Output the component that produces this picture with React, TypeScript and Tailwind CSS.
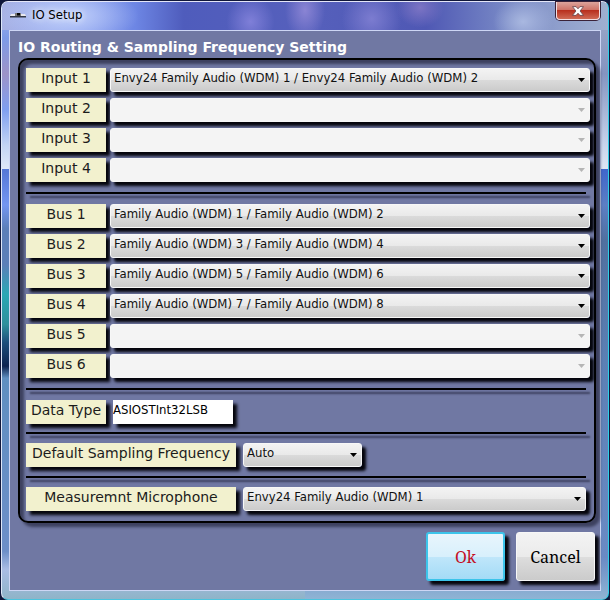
import { useState } from "react";

const device = "Envy24 Family Audio (WDM) 1";
const devicePair = "Envy24 Family Audio (WDM) 1 / Envy24 Family Audio (WDM) 2";

const inputs = [
    { name: "Input 1", value: devicePair },
    { name: "Input 2", value: "" },
    { name: "Input 3", value: "" },
    { name: "Input 4", value: "" },
];

const buses = [
    { name: "Bus 1", value: "Family Audio (WDM) 1 / Family Audio (WDM) 2" },
    { name: "Bus 2", value: "Family Audio (WDM) 3 / Family Audio (WDM) 4" },
    { name: "Bus 3", value: "Family Audio (WDM) 5 / Family Audio (WDM) 6" },
    { name: "Bus 4", value: "Family Audio (WDM) 7 / Family Audio (WDM) 8" },
    { name: "Bus 5", value: "" },
    { name: "Bus 6", value: "" },
];

function Label({ id, text, wide }: { id: string; text: string; wide?: boolean }) {
    return (
        <label
            htmlFor={id}
            className={
                "h-6 shrink-0 bg-[#f2f1ce] text-center text-sm leading-5 text-[#1c1c1c] shadow-[4px_4px_3px_#05050c] " +
                (wide ? "w-[210px]" : "w-20")
            }
        >
            {text}
        </label>
    );
}

function Combo({ id, value, className }: { id: string; value: string; className: string }) {
    const empty = value === "";
    return (
        <div className={"relative h-6 " + className}>
            <select
                id={id}
                disabled={empty}
                defaultValue={value}
                className="block h-6 w-full appearance-none rounded-[3px] border border-[#f7f7f7] bg-[linear-gradient(180deg,#f3f3f3_0%,#e9e9e9_50%,#dadada_52%,#cbcbcb_100%)] pr-6 pb-1 pl-[3px] font-['DejaVu_Sans_Condensed','DejaVu_Sans',sans-serif] text-[13px] leading-4 text-[#111] opacity-100 shadow-[4px_4px_3px_#05050c] outline-none disabled:bg-[#f4f4f4] disabled:bg-none"
            >
                <option value={value}>{value}</option>
            </select>
            <svg
                viewBox="0 0 7 4"
                className={"pointer-events-none absolute top-[10px] right-[5px] h-1 w-[7px] " + (empty ? "fill-[#b5b5b5]" : "fill-black")}
            >
                <path d="M0 0h7L3.5 4z" />
            </svg>
        </div>
    );
}

function Divider({ className }: { className: string }) {
    return <hr className={"mr-1 h-[2px] border-0 bg-black shadow-[4px_4px_2px_#3d415f] " + className} />;
}

function Rows({ rows }: { rows: { name: string; value: string }[] }) {
    return (
        <div className="flex flex-col gap-[6px]">
            {rows.map((row) => (
                <div key={row.name} className="flex gap-1">
                    <Label id={row.name} text={row.name} />
                    <Combo id={row.name} value={row.value} className="flex-1" />
                </div>
            ))}
        </div>
    );
}

function TitleBar({ onClose }: { onClose: () => void }) {
    return (
        <header className="flex h-[28px] items-start justify-between pl-2">
            <div className="flex items-center gap-[6px] pt-1">
                <svg viewBox="0 0 16 6" className="h-[6px] w-4">
                    <path d="M1 2h14l1 2H0z" fill="#e8e8ee" />
                    <path d="M0 4h16v1.5H0z" fill="#333846" />
                    <path d="M5 1h6v3H5z" fill="#777" />
                    <path d="M7 1h3v2.5H7z" fill="#050505" />
                </svg>
                <h1 className="font-['DejaVu_Sans_Condensed','DejaVu_Sans',sans-serif] text-[13px] leading-[18px] text-black [text-shadow:0_0_6px_#ffffffcc,0_0_8px_#ffffffaa]">
                    IO Setup
                </h1>
            </div>
            <button
                onClick={onClose}
                aria-label="Close"
                className="mr-2 flex h-[18px] w-11 items-center justify-center rounded-b-[4px] border border-t-0 border-[#f3dfe2] bg-[linear-gradient(180deg,#dba49c_0%,#cf7468_45%,#b8301f_50%,#cf6a55_100%)] shadow-[0_0_0_1px_#3a2238]"
            >
                <svg viewBox="0 0 11 9" className="h-[10px] w-3">
                    <path d="M.5.5h3.2l1.8 2 1.8-2h3.2L7.4 4.5l3.1 4H7.3l-1.8-2-1.8 2H.5l3.1-4z" fill="#fff" stroke="#5c4048" strokeWidth=".7" />
                </svg>
            </button>
        </header>
    );
}

function App() {
    const [open, setOpen] = useState(true);
    const close = () => setOpen(false);

    if (!open) return null;

    return (
        <div className="flex min-h-screen flex-col bg-[#10173a] px-px pt-px font-['DejaVu_Sans',sans-serif]">
            <main className="flex flex-1 flex-col rounded-[7px] border border-t-[#e4e6f8] border-r-[#2fd0ea] border-b-[#4cc4de] border-l-[#dfe8f8] bg-[linear-gradient(180deg,#9fabc8_0%,#8494c0_12%,#c8d4ec_24%,#dde6f4_28%,#3f66cc_28%,#5c7fc4_34%,#50709f_40%,#5c80b4_60%,#6a8ac4_93%,#8fb4d4_100%),linear-gradient(180deg,#a4b4f0_0%,#7d9be8_6%,#9c93c8_12%,#7f9ff0_18%,#c3d4f4_24%,#dfe8f8_28%,#5577d6_28%,#7396f0_34%,#5b7fb8_38%,#5b7fb8_44%,#2aa7b4_49%,#2f8f9c_54%,#1d4f7c_57%,#0e2450_61%,#5f8fc0_63%,#6d8fc8_92%,#a9bce4_95%,#8fb4c8_100%)] bg-[size:50%_100%,100%_100%] bg-[position:right,left] bg-no-repeat px-[7px] pb-2">
                <div className="-mx-[7px] rounded-t-[6px] bg-[radial-gradient(70px_30px_at_11%_50%,#c3d2fa_0%,transparent_100%),radial-gradient(24px_26px_at_41%_70%,#7f7fd8_0%,transparent_100%),radial-gradient(20px_30px_at_50%_30%,#8a84d4_0%,transparent_100%),radial-gradient(30px_30px_at_61%_60%,#7c7cd0_0%,transparent_100%),radial-gradient(24px_20px_at_69%_20%,#7c74c4_0%,transparent_100%),radial-gradient(30px_24px_at_86%_70%,#a9b8e0_0%,transparent_100%),linear-gradient(90deg,#a8b2e4_0%,#8aa0f0_12%,#6d86e4_22%,#4f5cbc_30%,#5660bc_50%,#4f58b4_70%,#7484c4_82%,#8f9fcc_92%,#9fb0d0_100%)]">
                    <TitleBar onClose={close} />
                </div>
                <section className="flex flex-1 flex-col border border-[#cdd6f4] bg-[#7078a3] pt-[6px] pr-[4px] pb-2 pl-2">
                    <h2 className="text-sm leading-5 font-bold text-white">
                        IO Routing &amp; Sampling Frequency Setting
                    </h2>
                    <div className="mt-[1px] rounded-[10px] border-2 border-black pt-2 pr-1 pb-[10px] pl-[6px] shadow-[4px_4px_3px_#3d415f,inset_4px_4px_3px_#3d415f]">
                        <Rows rows={inputs} />
                        <Divider className="my-[10px]" />
                        <Rows rows={buses} />
                        <Divider className="my-[10px]" />
                        <div className="flex gap-[7px]">
                            <Label id="data-type" text="Data Type" />
                            <input
                                id="data-type"
                                readOnly
                                defaultValue="ASIOSTInt32LSB"
                                className="h-6 w-[120px] bg-white pb-[6px] font-['DejaVu_Sans_Condensed','DejaVu_Sans',sans-serif] text-[13px] text-black shadow-[4px_4px_3px_#05050c] outline-none"
                            />
                        </div>
                        <Divider className="mt-2 mb-[9px]" />
                        <div className="flex gap-[7px]">
                            <Label id="frequency" text="Default Sampling Frequency" wide />
                            <Combo id="frequency" value="Auto" className="w-[119px]" />
                        </div>
                        <Divider className="my-[9px]" />
                        <div className="mr-1 flex gap-[7px]">
                            <Label id="microphone" text="Measuremnt Microphone" wide />
                            <Combo id="microphone" value={device} className="flex-1" />
                        </div>
                    </div>
                    <div className="mt-[9px] flex justify-end gap-[11px] pr-px font-['Noto_Serif','DejaVu_Serif',serif] text-base">
                        <button
                            onClick={close}
                            className="h-[49px] w-[79px] rounded-[3px] border-2 border-[#3cc4ea] bg-[linear-gradient(180deg,#e8f5fc_0%,#d8f0fc_50%,#bfe6fa_52%,#a4dbf6_100%)] text-[#c40f24] shadow-[4px_4px_3px_#05050c]"
                        >
                            Ok
                        </button>
                        <button
                            onClick={close}
                            className="h-[49px] w-[79px] rounded-[3px] border border-[#f7f7f7] bg-[linear-gradient(180deg,#f3f3f3_0%,#ebebeb_50%,#dddddd_52%,#cbcbcb_100%)] text-black shadow-[4px_4px_3px_#05050c]"
                        >
                            Cancel
                        </button>
                    </div>
                </section>
            </main>
        </div>
    );
}

export default App;
